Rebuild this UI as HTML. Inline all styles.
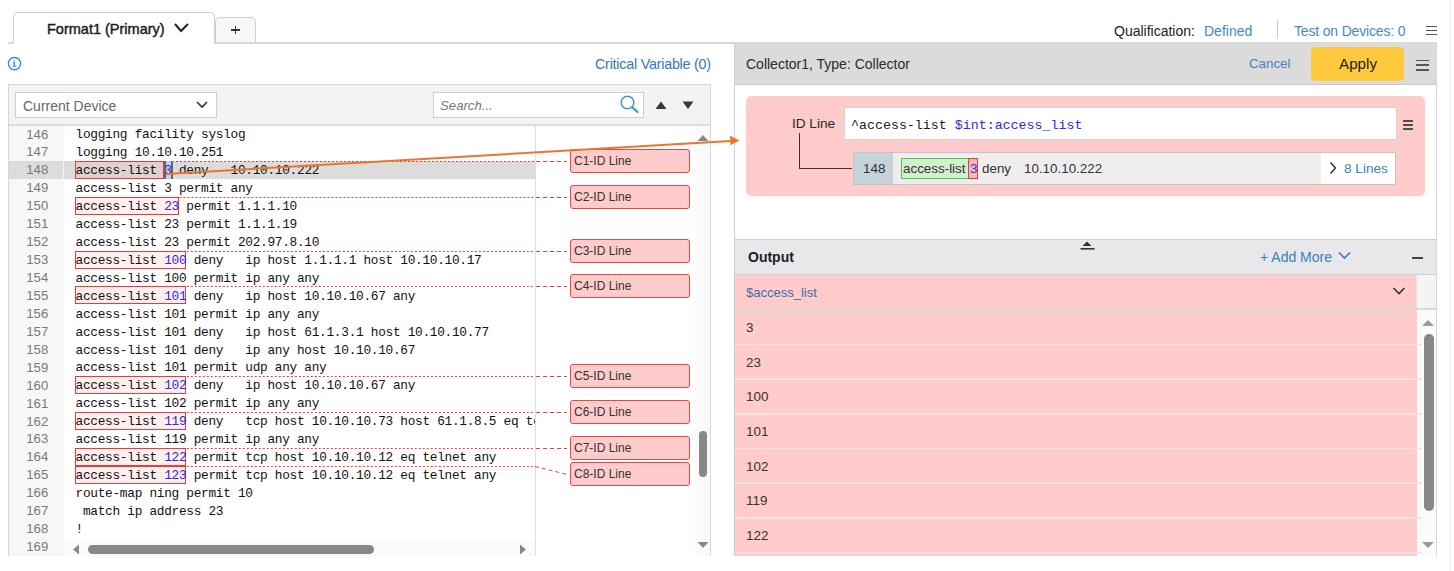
<!DOCTYPE html>
<html><head><meta charset="utf-8">
<style>
*{box-sizing:border-box;margin:0;padding:0}
html,body{width:1454px;height:571px;overflow:hidden;background:#fff;font-family:"Liberation Sans",sans-serif;color:#222}
.a{position:absolute}
.t{position:absolute;white-space:pre;line-height:1}
.mono{font-family:"Liberation Mono",monospace}
.blue{color:#4687c6}
.num{color:#2a2ae8}
</style></head><body>

<!-- page frame right line -->
<div class="a" style="left:1450px;top:0;width:1px;height:571px;background:#eceef0"></div>

<!-- tabs -->
<div class="a" style="left:8px;top:42px;width:1429px;height:1.5px;background:#d5d9dc"></div>
<div class="a" style="left:13px;top:12px;width:202px;height:31.5px;border:1.5px solid #cad0d4;border-bottom:none;border-radius:5px 5px 0 0;background:#fff"></div>
<div class="t" style="left:47px;top:22px;font-size:14.5px;-webkit-text-stroke:0.45px #1d1d1d;color:#1d1d1d">Format1 (Primary)</div>
<svg class="a" style="left:173px;top:22px" width="17" height="12"><path d="M2 2 L8 9 L15 2" fill="none" stroke="#222" stroke-width="2"/></svg>
<div class="a" style="left:214.5px;top:17px;width:41px;height:26px;border:1.5px solid #cad0d4;border-bottom:none;border-radius:5px 5px 0 0;background:#f6f7f8"></div>
<div class="a" style="left:231px;top:29.2px;width:8.5px;height:1.4px;background:#333"></div><div class="a" style="left:234.5px;top:25.8px;width:1.4px;height:8.5px;background:#333"></div><div class="a" style="left:215px;top:42px;width:41px;height:1.5px;background:#d5d9dc"></div>

<!-- top-right -->
<div class="t" style="left:1114px;top:24px;font-size:14px;color:#222">Qualification:</div>
<div class="t blue" style="left:1204px;top:24px;font-size:14px">Defined</div>
<div class="a" style="left:1277px;top:20px;width:1px;height:18px;background:#c8c8c8"></div>
<div class="t blue" style="left:1294px;top:24px;font-size:14px;letter-spacing:-0.17px">Test on Devices: 0</div>
<div class="a" style="left:1426px;top:25.5px;width:11px;height:1.5px;background:#555"></div>
<div class="a" style="left:1426px;top:29.8px;width:11px;height:1.5px;background:#555"></div>
<div class="a" style="left:1426px;top:33.8px;width:11px;height:1.5px;background:#555"></div>

<!-- info row -->
<svg class="a" style="left:6px;top:55px" width="17" height="17"><circle cx="8.5" cy="8.6" r="6.1" fill="none" stroke="#3a88d6" stroke-width="1.4"/><rect x="7.7" y="5.1" width="1.4" height="1.3" fill="#3a88d6"/><path d="M6.9 7.3 H9.1 V10.7 H10.3 V11.8 H6.5 V10.7 H7.7 V8.3 H6.9Z" fill="#3a88d6"/></svg>
<div class="t" style="left:595px;top:56.5px;font-size:14.3px;letter-spacing:-0.22px;color:#3578b0">Critical Variable (0)</div>

<!-- LEFT PANEL -->
<div id="left"><div class="a" style="left:8px;top:84px;width:703px;height:472px;border:1px solid #d6d6d6;border-bottom:none"></div>
<div class="a" style="left:9px;top:85px;width:701px;height:41px;background:#f3f3f3;border-bottom:2px solid #dcdcdc"></div>
<div class="a" style="left:15px;top:91.5px;width:202px;height:26.5px;background:#fff;border:1px solid #cfcfcf"></div>
<div class="t" style="left:23px;top:99px;font-size:14px;color:#666">Current Device</div>
<svg class="a" style="left:195px;top:99px" width="14" height="11"><path d="M2 3 L7 8 L12 3" fill="none" stroke="#333" stroke-width="1.6"/></svg>
<div class="a" style="left:433px;top:91.5px;width:211px;height:26.5px;background:#fff;border:1px solid #cfcfcf"></div>
<div class="t" style="left:440px;top:99px;font-size:13.2px;font-style:italic;color:#777">Search...</div>
<svg class="a" style="left:617px;top:93px" width="24" height="22"><circle cx="10.5" cy="9.5" r="6.3" fill="none" stroke="#4094ca" stroke-width="1.5"/><path d="M15 14 L20.5 19" stroke="#4094ca" stroke-width="2.3" stroke-linecap="round"/></svg>
<svg class="a" style="left:654px;top:100px" width="14" height="10"><path d="M1.5 9 L7 1.5 L12.5 9Z" fill="#2f3a44"/></svg>
<svg class="a" style="left:681px;top:100px" width="14" height="10"><path d="M1.5 1.5 L7 9 L12.5 1.5Z" fill="#2f3a44"/></svg>
<div class="a" style="left:9px;top:126px;width:55px;height:430px;background:#f7f7f7"></div>
<div class="a" style="left:9px;top:160.88px;width:54px;height:17.94px;background:#dcdcdc"></div>
<div class="a" style="left:64px;top:160.88px;width:471px;height:17.94px;background:#dcdcdc"></div>
<div class="a" style="left:535px;top:126px;width:1px;height:430px;background:#dedede"></div>
<div class="a" style="left:695px;top:126px;width:15px;height:430px;background:#fafafa"></div>
<div class="a" style="left:9px;top:125.5px;width:39.3px;text-align:right;font-size:13.2px;line-height:17.94px;color:#7a7a7a"><div style="height:17.94px">146</div><div style="height:17.94px">147</div><div style="height:17.94px">148</div><div style="height:17.94px">149</div><div style="height:17.94px">150</div><div style="height:17.94px">151</div><div style="height:17.94px">152</div><div style="height:17.94px">153</div><div style="height:17.94px">154</div><div style="height:17.94px">155</div><div style="height:17.94px">156</div><div style="height:17.94px">157</div><div style="height:17.94px">158</div><div style="height:17.94px">159</div><div style="height:17.94px">160</div><div style="height:17.94px">161</div><div style="height:17.94px">162</div><div style="height:17.94px">163</div><div style="height:17.94px">164</div><div style="height:17.94px">165</div><div style="height:17.94px">166</div><div style="height:17.94px">167</div><div style="height:17.94px">168</div><div style="height:17.94px">169</div></div>
<div class="a" style="left:75px;top:160.88px;width:89.2px;height:17.94px;background:rgba(255,120,120,0.12);border:1px solid #e63c3c"></div>
<div class="a" style="left:75px;top:196.76px;width:103.9px;height:17.94px;background:rgba(255,120,120,0.12);border:1px solid #e63c3c"></div>
<div class="a" style="left:75px;top:250.58px;width:111.3px;height:17.94px;background:rgba(255,120,120,0.12);border:1px solid #e63c3c"></div>
<div class="a" style="left:75px;top:286.46px;width:111.3px;height:17.94px;background:rgba(255,120,120,0.12);border:1px solid #e63c3c"></div>
<div class="a" style="left:75px;top:376.16px;width:111.3px;height:17.94px;background:rgba(255,120,120,0.12);border:1px solid #e63c3c"></div>
<div class="a" style="left:75px;top:412.04px;width:111.3px;height:17.94px;background:rgba(255,120,120,0.12);border:1px solid #e63c3c"></div>
<div class="a" style="left:75px;top:447.92px;width:111.3px;height:17.94px;background:rgba(255,120,120,0.12);border:1px solid #e63c3c"></div>
<div class="a" style="left:75px;top:465.86px;width:111.3px;height:17.94px;background:rgba(255,120,120,0.12);border:1px solid #e63c3c"></div>
<div class="a" style="left:165px;top:160.88px;width:6px;height:17.94px;background:#b7d3f0"></div>
<div class="a" style="left:164px;top:160.88px;width:2px;height:17.94px;background:#666"></div>
<div class="a" style="left:171px;top:160.88px;width:2px;height:17.94px;background:#666"></div>
<div class="a mono" style="left:64px;top:125px;width:471px;height:431px;overflow:hidden"><div class="a" style="left:11.6px;top:0;font-size:12.8px;letter-spacing:-0.3px;line-height:17.94px;white-space:pre;color:#111;padding-top:1.3px"><div style="height:17.94px">logging facility syslog</div><div style="height:17.94px">logging 10.10.10.251</div><div style="height:17.94px">access-list <span class="num">3</span> deny   10.10.10.222</div><div style="height:17.94px">access-list 3 permit any</div><div style="height:17.94px">access-list <span class="num">23</span> permit 1.1.1.10</div><div style="height:17.94px">access-list 23 permit 1.1.1.19</div><div style="height:17.94px">access-list 23 permit 202.97.8.10</div><div style="height:17.94px">access-list <span class="num">100</span> deny   ip host 1.1.1.1 host 10.10.10.17</div><div style="height:17.94px">access-list 100 permit ip any any</div><div style="height:17.94px">access-list <span class="num">101</span> deny   ip host 10.10.10.67 any</div><div style="height:17.94px">access-list 101 permit ip any any</div><div style="height:17.94px">access-list 101 deny   ip host 61.1.3.1 host 10.10.10.77</div><div style="height:17.94px">access-list 101 deny   ip any host 10.10.10.67</div><div style="height:17.94px">access-list 101 permit udp any any</div><div style="height:17.94px">access-list <span class="num">102</span> deny   ip host 10.10.10.67 any</div><div style="height:17.94px">access-list 102 permit ip any any</div><div style="height:17.94px">access-list <span class="num">119</span> deny   tcp host 10.10.10.73 host 61.1.8.5 eq telnet</div><div style="height:17.94px">access-list 119 permit ip any any</div><div style="height:17.94px">access-list <span class="num">122</span> permit tcp host 10.10.10.12 eq telnet any</div><div style="height:17.94px">access-list <span class="num">123</span> permit tcp host 10.10.10.12 eq telnet any</div><div style="height:17.94px">route-map ning permit 10</div><div style="height:17.94px"> match ip address 23</div><div style="height:17.94px">!</div><div style="height:17.94px">ip community-list 1 permit 10.10.7.201</div></div></div>
<div class="a" style="left:64px;top:542px;width:471px;height:14px;background:#fafafa"></div>
<svg class="a" style="left:70px;top:543px" width="12" height="13"><path d="M9 1.5 L3 6.5 L9 11.5Z" fill="#888"/></svg>
<div class="a" style="left:88px;top:545px;width:286px;height:9px;border-radius:4.5px;background:#888"></div>
<svg class="a" style="left:517px;top:543px" width="12" height="13"><path d="M3 1.5 L9 6.5 L3 11.5Z" fill="#888"/></svg>
<svg class="a" style="left:696px;top:133px" width="14" height="10"><path d="M1.5 8 L7 2 L12.5 8Z" fill="#888"/></svg>
<div class="a" style="left:698.5px;top:431px;width:8px;height:46px;border-radius:4px;background:#888"></div>
<svg class="a" style="left:696px;top:540px" width="14" height="10"><path d="M1.5 2 L7 8 L12.5 2Z" fill="#888"/></svg>
<div class="a" style="left:570px;top:148.88px;width:120px;height:24px;background:#ffcccc;border:1px solid #e8474a;border-radius:3px"></div>
<div class="t" style="left:574px;top:154.88px;font-size:12px;color:#333">C1-ID Line</div>
<div class="a" style="left:570px;top:184.76px;width:120px;height:24px;background:#ffcccc;border:1px solid #e8474a;border-radius:3px"></div>
<div class="t" style="left:574px;top:190.76px;font-size:12px;color:#333">C2-ID Line</div>
<div class="a" style="left:570px;top:238.58px;width:120px;height:24px;background:#ffcccc;border:1px solid #e8474a;border-radius:3px"></div>
<div class="t" style="left:574px;top:244.58px;font-size:12px;color:#333">C3-ID Line</div>
<div class="a" style="left:570px;top:274.46px;width:120px;height:24px;background:#ffcccc;border:1px solid #e8474a;border-radius:3px"></div>
<div class="t" style="left:574px;top:280.46px;font-size:12px;color:#333">C4-ID Line</div>
<div class="a" style="left:570px;top:364.16px;width:120px;height:24px;background:#ffcccc;border:1px solid #e8474a;border-radius:3px"></div>
<div class="t" style="left:574px;top:370.16px;font-size:12px;color:#333">C5-ID Line</div>
<div class="a" style="left:570px;top:400.04px;width:120px;height:24px;background:#ffcccc;border:1px solid #e8474a;border-radius:3px"></div>
<div class="t" style="left:574px;top:406.04px;font-size:12px;color:#333">C6-ID Line</div>
<div class="a" style="left:570px;top:435.92px;width:120px;height:24px;background:#ffcccc;border:1px solid #e8474a;border-radius:3px"></div>
<div class="t" style="left:574px;top:441.92px;font-size:12px;color:#333">C7-ID Line</div>
<div class="a" style="left:570px;top:462.40px;width:120px;height:24px;background:#ffcccc;border:1px solid #e8474a;border-radius:3px"></div>
<div class="t" style="left:574px;top:468.40px;font-size:12px;color:#333">C8-ID Line</div>
<svg class="a" style="left:0;top:0" width="740" height="571"><path d="M172.0 161.5 H535" stroke="#ee4040" stroke-width="1" stroke-dasharray="2 2"/><path d="M536 161.5 H567" stroke="#ee4040" stroke-width="1" stroke-dasharray="4 3"/><path d="M179.4 197.5 H535" stroke="#ee4040" stroke-width="1" stroke-dasharray="2 2"/><path d="M536 197.5 H567" stroke="#ee4040" stroke-width="1" stroke-dasharray="4 3"/><path d="M186.8 251.5 H535" stroke="#ee4040" stroke-width="1" stroke-dasharray="2 2"/><path d="M536 251.5 H567" stroke="#ee4040" stroke-width="1" stroke-dasharray="4 3"/><path d="M186.8 286.5 H535" stroke="#ee4040" stroke-width="1" stroke-dasharray="2 2"/><path d="M536 286.5 H567" stroke="#ee4040" stroke-width="1" stroke-dasharray="4 3"/><path d="M186.8 376.5 H535" stroke="#ee4040" stroke-width="1" stroke-dasharray="2 2"/><path d="M536 376.5 H567" stroke="#ee4040" stroke-width="1" stroke-dasharray="4 3"/><path d="M186.8 412.5 H535" stroke="#ee4040" stroke-width="1" stroke-dasharray="2 2"/><path d="M536 412.5 H567" stroke="#ee4040" stroke-width="1" stroke-dasharray="4 3"/><path d="M186.8 448.5 H535" stroke="#ee4040" stroke-width="1" stroke-dasharray="2 2"/><path d="M536 448.5 H567" stroke="#ee4040" stroke-width="1" stroke-dasharray="4 3"/><path d="M186.8 466.5 H535" stroke="#ee4040" stroke-width="1" stroke-dasharray="2 2"/><path d="M535 466.5 L567 474.4" stroke="#ee4040" stroke-width="1" stroke-dasharray="4 3"/></svg></div>

<!-- RIGHT PANEL -->
<div id="right"><div class="a" style="left:734px;top:43px;width:1px;height:513px;background:#cfcfcf"></div>
<div class="a" style="left:1436px;top:43px;width:1px;height:513px;background:#d6d6d6"></div>
<div class="a" style="left:735px;top:43px;width:701px;height:42px;background:#dcdbdc;border-bottom:1px solid #c9c9c9"></div>
<div class="t" style="left:746px;top:57px;font-size:14px;color:#2a2a2a">Collector1, Type: Collector</div>
<div class="t blue" style="left:1249px;top:57px;font-size:13.3px;color:#4682c0">Cancel</div>
<div class="a" style="left:1311px;top:47px;width:93px;height:34px;background:#ffc93d;border-radius:5px"></div>
<div class="t" style="left:1339px;top:56px;font-size:15.2px;color:#1e1e1e">Apply</div>
<div class="a" style="left:1416px;top:59.5px;width:13px;height:1.6px;background:#555"></div>
<div class="a" style="left:1416px;top:64.3px;width:13px;height:1.6px;background:#555"></div>
<div class="a" style="left:1416px;top:69.1px;width:13px;height:1.6px;background:#555"></div>
<div class="a" style="left:745.5px;top:96px;width:679px;height:100px;background:#ffcbcb;border-radius:5px"></div>
<div class="t" style="left:792px;top:117px;font-size:13.6px;color:#2a2a2a">ID Line</div>
<div class="a" style="left:843.5px;top:107px;width:553px;height:33px;background:#fff;border:1px solid #d2d2d2"></div>
<div class="t mono" style="left:851px;top:118.5px;font-size:13.3px;color:#222">^access-list <span style="color:#2a2ae8">$int:access_list</span></div>
<div class="a" style="left:1403px;top:120.2px;width:10px;height:1.8px;background:#505050"></div>
<div class="a" style="left:1403px;top:124.2px;width:10px;height:1.8px;background:#505050"></div>
<div class="a" style="left:1403px;top:128.2px;width:10px;height:1.8px;background:#505050"></div>
<div class="a" style="left:799px;top:133px;width:53px;height:36px;border-left:1.3px solid #333;border-bottom:1.3px solid #333"></div>
<div class="a" style="left:853px;top:152px;width:543px;height:33px;background:#efedee;border:1px solid #c4c4c4"></div>
<div class="a" style="left:854px;top:153px;width:39px;height:31px;background:#c6d2dc"></div>
<div class="a" style="left:1321px;top:153px;width:74px;height:31px;background:#fff"></div>
<div class="t" style="left:863px;top:162px;font-size:13.4px;color:#333">148</div>
<div class="a" style="left:901px;top:158px;width:68px;height:21px;background:#d4efcf;border:1px solid #3ed13e"></div>
<div class="a" style="left:968px;top:158px;width:10px;height:21px;background:#f2b8bc;border:1px solid #e23c44"></div>
<div class="t" style="left:903px;top:162px;font-size:13.4px;color:#333">access-list</div>
<div class="t" style="left:970px;top:162px;font-size:13.4px;color:#3a3ae0">3</div>
<div class="t" style="left:982px;top:162px;font-size:13.4px;color:#333">deny</div>
<div class="t" style="left:1024px;top:162px;font-size:13.4px;color:#333">10.10.10.222</div>
<svg class="a" style="left:1327px;top:160px" width="12" height="16"><path d="M3.5 2.5 L8.5 8 L3.5 13.5" fill="none" stroke="#333" stroke-width="1.5"/></svg>
<div class="t" style="left:1344px;top:162px;font-size:13.6px;color:#3d7fbc">8 Lines</div>
<div class="a" style="left:735px;top:239px;width:701px;height:36px;background:#e8e8ea;border-top:1px solid #d0d0d0;border-bottom:1px solid #d0d0d0"></div>
<div class="t" style="left:748px;top:250px;font-size:14px;font-weight:bold;color:#1e1e1e">Output</div>
<svg class="a" style="left:1079px;top:240px" width="18" height="11"><path d="M3.5 6 L8 1.5 L12.5 6Z" fill="#333"/><rect x="1.5" y="8" width="14" height="1.6" fill="#333"/></svg>
<div class="t" style="left:1260px;top:250px;font-size:14px;color:#3a7fc0">+ Add More</div>
<svg class="a" style="left:1337px;top:250px" width="16" height="11"><path d="M2 2.5 L7.5 8 L13 2.5" fill="none" stroke="#3a7fc0" stroke-width="1.6"/></svg>
<div class="a" style="left:1412px;top:257px;width:11px;height:1.8px;background:#444"></div>
<div class="a" style="left:735px;top:275px;width:682px;height:281px;background:#ffcbcb"></div>
<div class="a" style="left:1416px;top:275px;width:20px;height:34px;background:#f4f4f4;border-left:1px solid #e4e4e4"></div>
<div class="a" style="left:1417px;top:309px;width:19px;height:247px;background:#fbfbfb"></div>
<div class="t" style="left:746px;top:286px;font-size:13px;color:#3471ac">$access_list</div>
<svg class="a" style="left:1391px;top:285px" width="17" height="12"><path d="M2.5 3 L8 8.5 L13.5 3" fill="none" stroke="#333" stroke-width="1.6"/></svg>
<div class="a" style="left:735px;top:308.3px;width:701px;height:1.8px;background:#dbd8d8"></div>
<div class="t" style="left:746px;top:321.0px;font-size:13.4px;color:#333">3</div>
<div class="a" style="left:735px;top:343.7px;width:687px;height:1.5px;background:#f3e3e3"></div>
<div class="t" style="left:746px;top:355.7px;font-size:13.4px;color:#333">23</div>
<div class="a" style="left:735px;top:378.3px;width:687px;height:1.5px;background:#f3e3e3"></div>
<div class="t" style="left:746px;top:390.3px;font-size:13.4px;color:#333">100</div>
<div class="a" style="left:735px;top:413.0px;width:687px;height:1.5px;background:#f3e3e3"></div>
<div class="t" style="left:746px;top:425.0px;font-size:13.4px;color:#333">101</div>
<div class="a" style="left:735px;top:447.7px;width:687px;height:1.5px;background:#f3e3e3"></div>
<div class="t" style="left:746px;top:459.7px;font-size:13.4px;color:#333">102</div>
<div class="a" style="left:735px;top:482.4px;width:687px;height:1.5px;background:#f3e3e3"></div>
<div class="t" style="left:746px;top:494.4px;font-size:13.4px;color:#333">119</div>
<div class="a" style="left:735px;top:517.0px;width:687px;height:1.5px;background:#f3e3e3"></div>
<div class="t" style="left:746px;top:529.0px;font-size:13.4px;color:#333">122</div>
<div class="a" style="left:735px;top:551.7px;width:687px;height:1.5px;background:#f3e3e3"></div>
<svg class="a" style="left:1420px;top:317.5px" width="16" height="10"><path d="M2 8 L8 2 L14 8Z" fill="#999"/></svg>
<div class="a" style="left:1424px;top:334px;width:9.5px;height:177px;border-radius:4.75px;background:#888"></div>
<svg class="a" style="left:1420px;top:540px" width="16" height="10"><path d="M2 2 L8 8 L14 2Z" fill="#999"/></svg>
<svg class="a" style="left:0;top:0" width="745" height="200"><path d="M166 174 L731 141" stroke="#e8762f" stroke-width="2" fill="none"/><path d="M739.5 140.5 L730 135.8 L730.5 145.2Z" fill="#e8762f"/></svg></div>

</body></html>
